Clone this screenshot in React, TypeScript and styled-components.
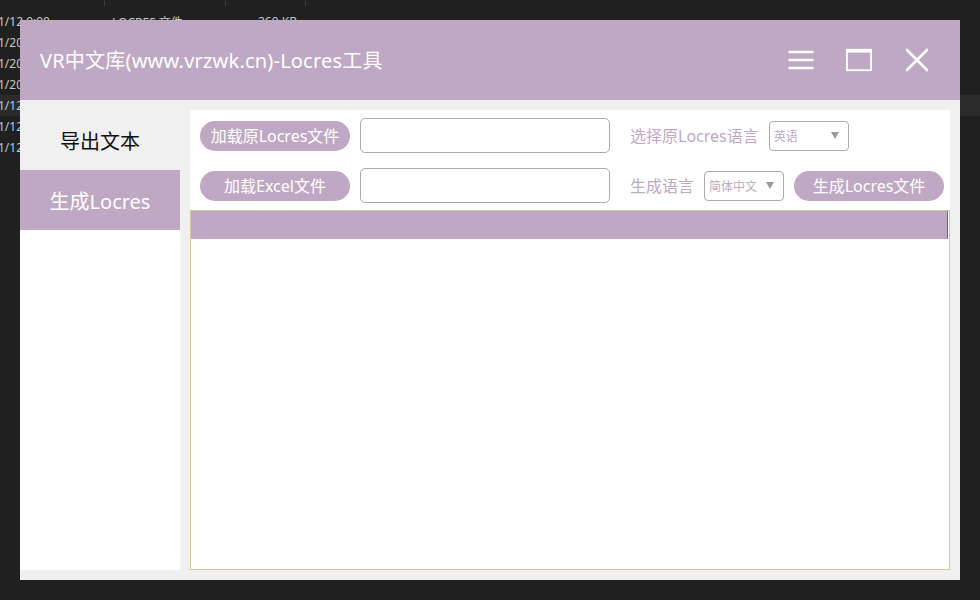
import React from "react";
import styled, { createGlobalStyle } from "styled-components";

const PURPLE = "#bfa8c3";

const Global = createGlobalStyle`
  html, body { margin: 0; padding: 0; background: #202020; }
  body { width: 980px; height: 600px; overflow: hidden; font-family: "Noto Sans", "Noto Sans CJK SC", sans-serif; }
  * { box-sizing: border-box; }
`;

const Desktop = styled.div`
  position: relative;
  width: 980px;
  height: 600px;
  background: #202020;
  overflow: hidden;
`;

const ColumnTicks = styled.div`
  display: flex;
  height: 6px;
  padding-left: 104px;
`;

const Tick = styled.div<{ $w: number }>`
  width: ${(p) => p.$w}px;
  border-left: 1px solid #3c3c3c;
  height: 6px;
`;

const FileList = styled.div`
  display: flex;
  flex-direction: column;
  padding-top: 5px;
`;

const FileRow = styled.div<{ $hl?: boolean; $blue?: boolean }>`
  display: flex;
  align-items: center;
  height: 21px;
  margin-left: -2px;
  font-family: "Noto Sans", "Noto Sans CJK SC", sans-serif;
  font-size: 12px;
  color: ${(p) => (p.$blue ? "#a8cdea" : "#c8c8c8")};
  background: ${(p) => (p.$hl ? "#2b2b2b" : "transparent")};
`;

const FileCell = styled.span<{ $w: number }>`
  width: ${(p) => p.$w}px;
  white-space: nowrap;
  overflow: hidden;
`;

const Window = styled.div`
  position: absolute;
  left: 20px;
  top: 20px;
  width: 940px;
  height: 560px;
  display: flex;
  flex-direction: column;
  background: #f0f0f0;
`;

const TitleBar = styled.div`
  height: 80px;
  flex: none;
  background: ${PURPLE};
  display: flex;
  align-items: center;
  padding: 0 30px 0 20px;
`;

const Title = styled.div`
  flex: 1;
  color: #fff;
  font-size: 20px;
  font-family: "Noto Sans", "Noto Sans CJK SC", sans-serif;
  letter-spacing: 0.2px;
  padding-bottom: 2px;
`;

const TitleButtons = styled.div`
  display: flex;
  align-items: center;
  gap: 32px;
`;

const IconBtn = styled.div`
  width: 26px;
  height: 26px;
  display: flex;
  align-items: center;
  justify-content: center;
`;

const Body = styled.div`
  flex: 1;
  display: flex;
  gap: 10px;
  padding: 0 10px 10px 0;
  min-height: 0;
`;

const Sidebar = styled.div`
  width: 160px;
  flex: none;
  display: flex;
  flex-direction: column;
  background: #fff;
`;

const NavItem = styled.div<{ $active?: boolean; $top?: boolean }>`
  height: ${(p) => (p.$top ? 70 : 60)}px;
  padding-top: ${(p) => (p.$top ? 10 : 0)}px;
  display: flex;
  align-items: center;
  justify-content: center;
  font-size: 20px;
  font-family: "Noto Sans", "Noto Sans CJK SC", sans-serif;
  background: ${(p) => (p.$active ? PURPLE : "#f0f0f0")};
  color: ${(p) => (p.$active ? "#fff" : "#111")};
`;

const Panel = styled.div`
  flex: 1;
  margin-top: 10px;
  background: #fff;
  display: flex;
  flex-direction: column;
  padding-top: 8px;
  min-width: 0;
`;

const Row = styled.div<{ $gap: number }>`
  display: flex;
  align-items: center;
  height: 35px;
  flex: none;
  padding-left: 10px;
  margin-bottom: ${(p) => p.$gap}px;
`;

const PillButton = styled.div`
  width: 150px;
  height: 30px;
  border-radius: 15px;
  background: ${PURPLE};
  color: #fff;
  font-size: 16px;
  display: flex;
  align-items: center;
  justify-content: center;
  flex: none;
  padding-bottom: 1px;
`;

const Input = styled.div`
  width: 250px;
  height: 35px;
  margin-left: 10px;
  border: 1px solid #ababab;
  border-radius: 5px;
  background: #fff;
  flex: none;
`;

const Label = styled.div`
  margin-left: 20px;
  margin-right: 10px;
  color: ${PURPLE};
  font-size: 16px;
  white-space: nowrap;
  padding-bottom: 1px;
`;

const Select = styled.div`
  width: 80px;
  height: 30px;
  border: 1px solid #ababab;
  border-radius: 4px;
  display: flex;
  align-items: center;
  justify-content: space-between;
  padding: 0 9px 0 4px;
  font-size: 12px;
  color: ${PURPLE};
  font-family: "Noto Sans CJK SC", sans-serif;
  flex: none;
  margin-right: 10px;
`;

const Arrow = styled.span`
  width: 0;
  height: 0;
  border-left: 4px solid transparent;
  border-right: 4px solid transparent;
  border-top: 7px solid #9a9a9a;
`;

const Table = styled.div`
  flex: 1;
  border: 1px solid #d6c79c;
  display: flex;
  flex-direction: column;
`;

const TableHead = styled.div`
  height: 28px;
  background: ${PURPLE};
  border-right: 1px solid #6b6b6b;
  margin-right: 1px;
`;

const files = [
  { d: "1/12 9:00", t: "LOCRES 文件", s: "260 KB" },
  { d: "1/20 10:12", t: "", s: "" },
  { d: "1/20 10:12", t: "", s: "" },
  { d: "1/20 10:12", t: "", s: "" },
  { d: "1/12 9:00", t: "", s: "", hl: true, blue: true },
  { d: "1/12 9:00", t: "", s: "", blue: true },
  { d: "1/12 9:00", t: "", s: "", blue: true },
];

const Hamburger = () => (
  <svg width="26" height="22" viewBox="0 0 26 22">
    <g stroke="#fff" strokeWidth="2.5" strokeLinecap="round">
      <line x1="1.5" y1="3" x2="24.5" y2="3" />
      <line x1="1.5" y1="11" x2="24.5" y2="11" />
      <line x1="1.5" y1="19" x2="24.5" y2="19" />
    </g>
  </svg>
);

const Maximize = () => (
  <svg width="28" height="24" viewBox="0 0 28 24">
    <rect x="1" y="2" width="26" height="21" fill="none" stroke="#fff" strokeWidth="2" />
    <rect x="0" y="0" width="28" height="4" fill="#fff" />
  </svg>
);

const Close = () => (
  <svg width="24" height="24" viewBox="0 0 24 24">
    <g stroke="#fff" strokeWidth="2.6" strokeLinecap="round">
      <line x1="2" y1="2" x2="22" y2="22" />
      <line x1="22" y1="2" x2="2" y2="22" />
    </g>
  </svg>
);

export default function App() {
  return (
    <Desktop>
      <Global />
      <ColumnTicks>
        <Tick $w={121} />
        <Tick $w={80} />
        <Tick $w={10} />
      </ColumnTicks>
      <FileList>
        {files.map((f, i) => (
          <FileRow key={i} $hl={f.hl} $blue={f.blue}>
            <FileCell $w={114}>{f.d}</FileCell>
            <FileCell $w={146}>{f.t}</FileCell>
            <FileCell $w={80}>{f.s}</FileCell>
          </FileRow>
        ))}
      </FileList>
      <Window>
        <TitleBar>
          <Title>VR中文库(www.vrzwk.cn)-Locres工具</Title>
          <TitleButtons>
            <IconBtn><Hamburger /></IconBtn>
            <IconBtn><Maximize /></IconBtn>
            <IconBtn><Close /></IconBtn>
          </TitleButtons>
        </TitleBar>
        <Body>
          <Sidebar>
            <NavItem $top>导出文本</NavItem>
            <NavItem $active>生成Locres</NavItem>
          </Sidebar>
          <Panel>
            <Row $gap={15}>
              <PillButton>加载原Locres文件</PillButton>
              <Input />
              <Label>选择原Locres语言</Label>
              <Select>
                <span>英语</span>
                <Arrow />
              </Select>
            </Row>
            <Row $gap={7}>
              <PillButton>加载Excel文件</PillButton>
              <Input />
              <Label>生成语言</Label>
              <Select>
                <span>简体中文</span>
                <Arrow />
              </Select>
              <PillButton>生成Locres文件</PillButton>
            </Row>
            <Table>
              <TableHead />
            </Table>
          </Panel>
        </Body>
      </Window>
    </Desktop>
  );
}
